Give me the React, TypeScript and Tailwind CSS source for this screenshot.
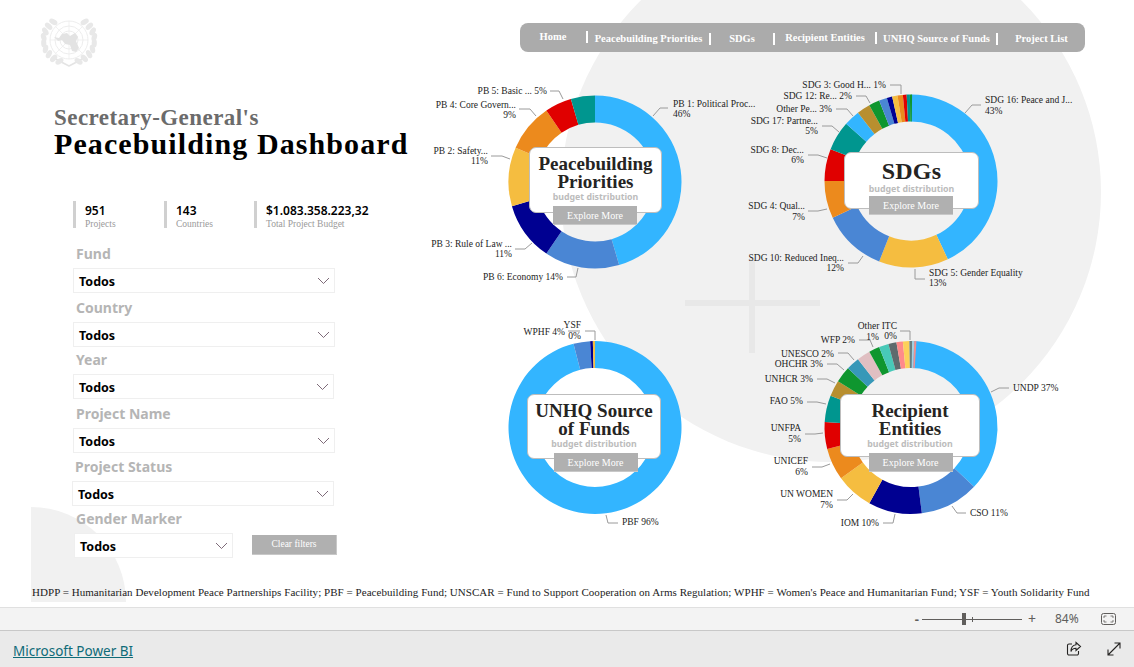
const BLUE = "#33b5ff";
const MID = "#4a86d4";
const NAVY = "#000091";
const YELLOW = "#f5bd40";
const ORANGE = "#ec8a1d";
const RED = "#e00000";
const TEAL = "#00968f";
const GOLD = "#b88f2f";
const GREEN = "#0f962f";

type Label = { x: number; y: number; text: string; end?: boolean };

type Chart = {
  viewBox: string;
  cx: number;
  cy: number;
  slices: [number, string][];
  labels: Label[];
  leaders: string[];
};

const charts: Record<string, Chart> = {
  pb: {
    viewBox: "425 70 320 245",
    cx: 595,
    cy: 182,
    slices: [
      [45.5, BLUE],
      [14, MID],
      [11, NAVY],
      [11, YELLOW],
      [9, ORANGE],
      [5, RED],
      [4.5, TEAL],
    ],
    labels: [
      { x: 547, y: 94, text: "PB 5: Basic ... 5%", end: true },
      { x: 516, y: 108, text: "PB 4: Core Govern...", end: true },
      { x: 516, y: 118, text: "9%", end: true },
      { x: 488, y: 154, text: "PB 2: Safety...", end: true },
      { x: 488, y: 164, text: "11%", end: true },
      { x: 512, y: 247, text: "PB 3: Rule of Law ...", end: true },
      { x: 512, y: 257, text: "11%", end: true },
      { x: 563, y: 280, text: "PB 6: Economy 14%", end: true },
      { x: 673, y: 107, text: "PB 1: Political Proc..." },
      { x: 673, y: 117, text: "46%" },
    ],
    leaders: [
      "550,91 559,91 563,99",
      "519,109 530,109 536,116",
      "491,156 502,156 510,159",
      "515,249 525,249 532,243",
      "567,277 576,277 578,268",
      "668,108 660,108 653,116",
    ],
  },
  sdg: {
    viewBox: "745 70 340 245",
    cx: 911,
    cy: 181,
    slices: [
      [43, BLUE],
      [13, YELLOW],
      [12, MID],
      [7, ORANGE],
      [6, RED],
      [5.5, TEAL],
      [3, BLUE],
      [2.5, GOLD],
      [2, GREEN],
      [1.5, MID],
      [1, NAVY],
      [1, YELLOW],
      [1, ORANGE],
      [0.7, RED],
      [0.6, TEAL],
      [0.4, GREEN],
    ],
    labels: [
      { x: 886, y: 88, text: "SDG 3: Good H... 1%", end: true },
      { x: 852, y: 99, text: "SDG 12: Re... 2%", end: true },
      { x: 832, y: 112, text: "Other Pe... 3%", end: true },
      { x: 818, y: 124, text: "SDG 17: Partne...", end: true },
      { x: 818, y: 134, text: "5%", end: true },
      { x: 804, y: 153, text: "SDG 8: Dec...", end: true },
      { x: 804, y: 163, text: "6%", end: true },
      { x: 805, y: 209, text: "SDG 4: Qual...", end: true },
      { x: 805, y: 220, text: "7%", end: true },
      { x: 844, y: 261, text: "SDG 10: Reduced Ineq...", end: true },
      { x: 844, y: 271, text: "12%", end: true },
      { x: 929, y: 276, text: "SDG 5: Gender Equality" },
      { x: 929, y: 286, text: "13%" },
      { x: 985, y: 103, text: "SDG 16: Peace and J..." },
      { x: 985, y: 114, text: "43%" },
    ],
    leaders: [
      "890,85 901,85 901,94",
      "856,96 866,96 870,103",
      "836,109 847,109 853,116",
      "822,126 832,126 839,132",
      "808,155 818,155 827,158",
      "808,211 818,211 827,209",
      "848,263 858,263 863,256",
      "925,279 915,279 915,269",
      "981,105 972,105 965,113",
    ],
  },
  unhq: {
    viewBox: "425 315 320 245",
    cx: 595,
    cy: 427.5,
    slices: [
      [96, BLUE],
      [3.1, MID],
      [0.5, NAVY],
      [0.4, YELLOW],
    ],
    labels: [
      { x: 565, y: 335, text: "WPHF 4%", end: true },
      { x: 581, y: 328, text: "YSF", end: true },
      { x: 581, y: 339, text: "0%", end: true },
      { x: 622, y: 525, text: "PBF 96%" },
    ],
    leaders: ["568,331 580,331", "585,331 595,331 595,340", "618,523 608,523 606,515"],
  },
  rec: {
    viewBox: "745 315 340 245",
    cx: 911,
    cy: 427.5,
    slices: [
      [37, BLUE],
      [11, MID],
      [10, NAVY],
      [7, YELLOW],
      [6, ORANGE],
      [5, RED],
      [5, TEAL],
      [3, GOLD],
      [3, GREEN],
      [2.5, "#3798b8"],
      [2.5, "#e0bfc2"],
      [2, GREEN],
      [1.8, "#48c9b8"],
      [1.5, "#5f6b6d"],
      [1.2, "#ff8a8a"],
      [1.2, "#fdd05a"],
      [0.5, "#6b7e7e"],
      [0.4, "#a6d0e0"],
      [0.4, "#f09090"],
    ],
    labels: [
      { x: 897, y: 329, text: "Other ITC", end: true },
      { x: 897, y: 339, text: "0%", end: true },
      { x: 855, y: 343, text: "WFP 2%", end: true },
      { x: 879, y: 340, text: "1%", end: true },
      { x: 834, y: 357, text: "UNESCO 2%", end: true },
      { x: 823, y: 367, text: "OHCHR 3%", end: true },
      { x: 813, y: 382, text: "UNHCR 3%", end: true },
      { x: 803, y: 404, text: "FAO 5%", end: true },
      { x: 801, y: 431, text: "UNFPA", end: true },
      { x: 801, y: 442, text: "5%", end: true },
      { x: 808, y: 464, text: "UNICEF", end: true },
      { x: 808, y: 475, text: "6%", end: true },
      { x: 833, y: 497, text: "UN WOMEN", end: true },
      { x: 833, y: 508, text: "7%", end: true },
      { x: 879, y: 526, text: "IOM 10%", end: true },
      { x: 970, y: 516, text: "CSO 11%" },
      { x: 1013, y: 391, text: "UNDP 37%" },
    ],
    leaders: [
      "900,331 910,331 910,340",
      "859,340 870,340 873,347",
      "838,353 848,353 854,360",
      "827,364 837,364 844,370",
      "817,379 827,379 835,383",
      "807,402 817,402 826,404",
      "805,434 815,434 823,433",
      "812,467 822,467 830,464",
      "837,500 847,500 853,494",
      "883,523 893,523 895,514",
      "966,513 957,513 952,506",
      "1009,388 999,388 991,392",
    ],
  },
};

const OUTER = 86.5;
const INNER = 59.5;

function slicePath(cx: number, cy: number, from: number, to: number) {
  const point = (pct: number, r: number) => {
    const a = (pct / 100) * Math.PI * 2 - Math.PI / 2;
    return `${(cx + r * Math.cos(a)).toFixed(2)} ${(cy + r * Math.sin(a)).toFixed(2)}`;
  };
  const large = to - from > 50 ? 1 : 0;
  return `M${point(from, OUTER)}A${OUTER} ${OUTER} 0 ${large} 1 ${point(to, OUTER)}L${point(to, INNER)}A${INNER} ${INNER} 0 ${large} 0 ${point(from, INNER)}Z`;
}

function Donut({ chart }: { chart: Chart }) {
  let total = 0;
  return (
    <svg viewBox={chart.viewBox} className="absolute inset-0 h-full w-full overflow-visible">
      {chart.slices.map(([value, color], i) => {
        const from = total;
        total += value;
        return <path key={i} d={slicePath(chart.cx, chart.cy, from, total)} fill={color} />;
      })}
      {chart.leaders.map((points) => (
        <polyline key={points} points={points} fill="none" stroke="#9a9a9a" strokeWidth="1" />
      ))}
      {chart.labels.map((label) => (
        <text
          key={label.text + label.y}
          x={label.x}
          y={label.y}
          textAnchor={label.end ? "end" : "start"}
          className="fill-[#1c1c1c] font-['Liberation_Serif',serif] text-[9.5px]"
        >
          {label.text}
        </text>
      ))}
    </svg>
  );
}

function CenterCard({
  lines,
  place,
  cardClass,
  buttonClass,
}: {
  lines: string[];
  place: string;
  cardClass: string;
  buttonClass: string;
}) {
  return (
    <div className={`absolute flex flex-col items-center ${place}`}>
      <div className={`flex w-full flex-col items-center rounded-[7px] border border-[#bdbdbd] bg-white ${cardClass}`}>
        {lines.map((line) => (
          <div
            key={line}
            className={
              lines.length === 1
                ? "font-['Liberation_Serif',serif] text-[24px] leading-[24px] font-bold tracking-[0.2px] text-[#252423]"
                : "font-['Liberation_Serif',serif] text-[19px] leading-[18px] font-bold text-[#252423]"
            }
          >
            {line}
          </div>
        ))}
        <div className="font-['Noto_Sans',sans-serif] text-[8.8px] leading-[12px] font-bold text-[#bcbcbc]">
          budget distribution
        </div>
      </div>
      <div
        className={`relative flex h-[19px] w-[84px] items-center justify-center border-b border-[#c8c8c8] bg-[#b0b0b0] font-['Liberation_Serif',serif] text-[10px] text-white ${buttonClass}`}
      >
        Explore More
      </div>
    </div>
  );
}

// UN emblem: leaves run round the globe on both sides, from the crown down to the crossing stems
function Logo() {
  const leaves = Array.from({ length: 9 }, (_, i) => -52 + i * 15);
  const stroke = "#ebebeb";
  return (
    <svg viewBox="0 0 58 50" className="h-[50px] w-[58px]" fill="none" stroke={stroke}>
      <circle cx="29" cy="23" r="19" strokeWidth="0.9" />
      <circle cx="29" cy="23" r="14" strokeWidth="0.9" />
      <circle cx="29" cy="23" r="9" strokeWidth="0.9" />
      <path d="M29 4v38M10 23h38M15.5 9.5l27 27M42.5 9.5l-27 27" strokeWidth="0.7" />
      <path d="M14 20l5 1 3-4 5-1 3 3 5-3 3 4-2 4 3 7-3 4-4-1-2-6-5-1-3-4-4 1z" fill="#e3e3e3" stroke="none" />
      <path d="M16 42c5 3 9 5 13 7 4-2 8-4 13-7" stroke="#e4e4e4" strokeWidth="1.5" />
      {leaves.map((deg) => {
        const a = (deg * Math.PI) / 180;
        const lx = 29 - 25.5 * Math.cos(a);
        const rx = 29 + 25.5 * Math.cos(a);
        const y = 23 + 23 * Math.sin(a);
        return (
          <g key={deg} fill="#e8e8e8" stroke="none">
            <ellipse cx={lx} cy={y} rx="2.6" ry="4.4" transform={`rotate(${deg - 10} ${lx} ${y})`} />
            <ellipse cx={rx} cy={y} rx="2.6" ry="4.4" transform={`rotate(${10 - deg} ${rx} ${y})`} />
          </g>
        );
      })}
    </svg>
  );
}

function Kpi({ value, label, width }: { value: string; label: string; width: string }) {
  return (
    <div className={`flex h-[27px] border-l-[3px] border-[#d0d0d0] pl-[9px] ${width}`}>
      <div className="mt-[2px] flex flex-col">
        <span className="font-['Noto_Sans',sans-serif] text-[12px] leading-[16px] font-semibold text-black">{value}</span>
        <span className="font-['Liberation_Serif',serif] text-[9.5px] leading-[11px] text-[#9a9a9a]">{label}</span>
      </div>
    </div>
  );
}

function Filter({ label, className, width }: { label: string; className: string; width: string }) {
  return (
    <div className={className}>
      <div className="ml-[3px] h-[14px] font-['Noto_Sans',sans-serif] text-[14px] leading-[14px] font-bold text-[#b5b5b5]">
        {label}
      </div>
      <div className={`mt-[7px] flex h-[25px] items-center justify-between border border-[#efefef] bg-white pr-[3px] pl-[5px] ${width}`}>
        <span className="pt-[4px] font-['Noto_Sans',sans-serif] text-[12.5px] font-bold text-black">Todos</span>
        <svg viewBox="0 0 13 7" className="mr-[1px] h-[7px] w-[13px]" fill="none" stroke="#6f5a6a" strokeWidth="0.9">
          <path d="M1 1l5.5 5.5L12 1" />
        </svg>
      </div>
    </div>
  );
}

const navItems = [
  { label: "Home", className: "w-[68px] pb-[2px]", sep: true },
  { label: "Peacebuilding Priorities", className: "w-[123px] pt-[2px]", sep: true },
  { label: "SDGs", className: "w-[64px] pt-[2px]", sep: true },
  { label: "Recipient Entities", className: "w-[102px]", sep: true },
  { label: "UNHQ Source of Funds", className: "w-[121px] pt-[2px]", sep: true },
  { label: "Project List", className: "w-[87px] pt-[2px]", sep: false },
];

export default function App() {
  return (
    <div className="flex h-screen w-full flex-col overflow-hidden bg-white">
      <main className="relative h-[607px] shrink-0 overflow-hidden">
        {/* watermark shapes behind the report */}
        <svg viewBox="0 0 1134 607" className="absolute inset-0 h-[607px] w-[1134px]">
          <circle cx="831" cy="192" r="270" fill="#f1f1f1" />
          <path d="M31 602V507A95 95 0 0 1 126 602Z" fill="#f1f1f1" />
          <rect x="685" y="300" width="135" height="6" fill="#e8e8e8" />
          <rect x="749" y="258" width="6" height="95" fill="#e8e8e8" />
        </svg>

        <div className="relative flex h-[585px]">
          <section className="flex w-[425px] shrink-0 flex-col">
            <div className="mt-[17px] ml-[40px]">
              <Logo />
            </div>
            <div className="mt-[39px] ml-[54px] font-['Liberation_Serif',serif] font-bold">
              <div className="text-[23px] leading-[24px] tracking-[0.45px] text-[#6b6b6b]">Secretary-General's</div>
              <div className="text-[30px] leading-[27px] tracking-[1.1px] whitespace-nowrap text-black">Peacebuilding Dashboard</div>
            </div>
            <div className="mt-[44px] ml-[73px] flex">
              <Kpi value="951" label="Projects" width="w-[91px]" />
              <Kpi value="143" label="Countries" width="w-[90px]" />
              <Kpi value="$1.083.358.223,32" label="Total Project Budget" width="w-[160px]" />
            </div>
            <Filter label="Fund" className="mt-[19px] ml-[73px]" width="w-[262px]" />
            <Filter label="Country" className="mt-[8px] ml-[73px]" width="w-[262px]" />
            <Filter label="Year" className="mt-[6px] ml-[73px]" width="w-[261px]" />
            <Filter label="Project Name" className="mt-[8px] ml-[73px]" width="w-[262px]" />
            <Filter label="Project Status" className="mt-[7px] ml-[72px]" width="w-[262px]" />
            <div className="mt-[6px] ml-[73px] flex items-end">
              <Filter label="Gender Marker" className="" width="ml-[1px] w-[159px]" />
              <button className="mb-[3px] ml-[19px] h-[20px] w-[85px] border-r border-b border-[#c8c8c8] bg-[#b0b0b0] font-['Liberation_Serif',serif] text-[9.5px] text-white">
                Clear filters
              </button>
            </div>
          </section>

          <section className="flex flex-col">
            <nav className="mt-[23px] ml-[95px] flex h-[29px] w-[565px] items-center rounded-lg bg-[#ababab]">
              {navItems.map((item) => (
                <div key={item.label} className={`flex h-full shrink-0 items-center ${item.className}`}>
                  <span className="flex-1 text-center font-['Liberation_Serif',serif] text-[10.5px] font-bold whitespace-nowrap text-white">
                    {item.label}
                  </span>
                  {item.sep && <span className="h-[12px] w-[2px] bg-white" />}
                </div>
              ))}
            </nav>

            <div className="mt-[18px] grid grid-cols-[320px_340px] grid-rows-[245px_245px]">
              <div className="relative">
                <Donut chart={charts.pb} />
                <CenterCard
                  lines={["Peacebuilding", "Priorities"]}
                  place="left-[104px] top-[77px] w-[133px]"
                  cardClass="h-[66px] pt-[7px]"
                  buttonClass="-mt-[7px] -ml-[1px]"
                />
              </div>
              <div className="relative">
                <Donut chart={charts.sdg} />
                <CenterCard
                  lines={["SDGs"]}
                  place="left-[99px] top-[82px] w-[135px]"
                  cardClass="h-[57px] pt-[6px]"
                  buttonClass="-mt-[13px] -ml-[1px]"
                />
              </div>
              <div className="relative">
                <Donut chart={charts.unhq} />
                <CenterCard
                  lines={["UNHQ Source", "of Funds"]}
                  place="left-[102px] top-[79px] w-[134px]"
                  cardClass="h-[65px] pt-[7px]"
                  buttonClass="-mt-[6px] ml-[3px]"
                />
              </div>
              <div className="relative">
                <Donut chart={charts.rec} />
                <CenterCard
                  lines={["Recipient", "Entities"]}
                  place="left-[95px] top-[79px] w-[140px]"
                  cardClass="h-[63px] pt-[7px]"
                  buttonClass="-mt-[4px] ml-[1px]"
                />
              </div>
            </div>
          </section>
        </div>

        <p className="relative ml-[32px] font-['Liberation_Serif',serif] text-[11px] leading-[14px] tracking-[0.04px] whitespace-nowrap text-[#1c1c1c]">
          HDPP = Humanitarian Development Peace Partnerships Facility; PBF = Peacebuilding Fund; UNSCAR = Fund to Support Cooperation on Arms Regulation; WPHF = Women's Peace and Humanitarian Fund; YSF = Youth Solidarity Fund
        </p>
      </main>

      <div className="flex h-[24px] shrink-0 items-center justify-end border-t border-b border-t-[#e0e0e0] border-b-[#c8c8c8] bg-[#f3f3f3] font-['Noto_Sans',sans-serif] text-[#605e5c]">
        <span className="mr-[3px] text-[13px] leading-none font-bold">-</span>
        <div className="relative h-[1px] w-[100px] bg-[#605e5c]">
          <span className="absolute top-[-6px] left-[40px] h-[12px] w-[4px] bg-[#605e5c]" />
          <span className="absolute top-[-2px] left-[50px] h-[5px] w-[1px] bg-[#605e5c]" />
        </div>
        <span className="ml-[6px] text-[14px] leading-none">+</span>
        <span className="ml-[19px] w-[24px] text-[12px]">84%</span>
        <svg viewBox="0 0 15 12" className="mr-[18px] ml-[22px] h-[12px] w-[15px]" fill="none" stroke="#605e5c">
          <rect x="0.5" y="0.5" width="14" height="11" rx="2" />
          <path d="M3 5V3h2.5M9.5 3H12v2M3 7v2h2.5M9.5 9H12V7" strokeWidth="0.8" />
        </svg>
      </div>

      <footer className="flex flex-1 items-center justify-between bg-[#eaeaea] pr-[12px] pl-[13px]">
        <a className="mt-[4px] font-['Noto_Sans',sans-serif] text-[13.5px] text-[#0f6b78] underline">Microsoft Power BI</a>
        <div className="flex items-center gap-[24px]">
          <svg viewBox="0 0 16 16" className="h-[16px] w-[16px]" fill="none" stroke="#252423" strokeWidth="1.1">
            <path d="M6 3H3a1.5 1.5 0 0 0-1.5 1.5v8A1.5 1.5 0 0 0 3 14h8a1.5 1.5 0 0 0 1.5-1.5V10" />
            <path d="M10 1.5 14.5 5.5 10 9.5V7.3C7.5 7.3 5.8 8.3 5 10.5 5 7 7 4.2 10 3.8Z" />
          </svg>
          <svg viewBox="0 0 16 16" className="h-[16px] w-[16px]" fill="none" stroke="#252423" strokeWidth="1.1">
            <path d="M2 14 14 2M8.5 2H14v5.5M2 8.5V14h5.5" />
          </svg>
        </div>
      </footer>
    </div>
  );
}
